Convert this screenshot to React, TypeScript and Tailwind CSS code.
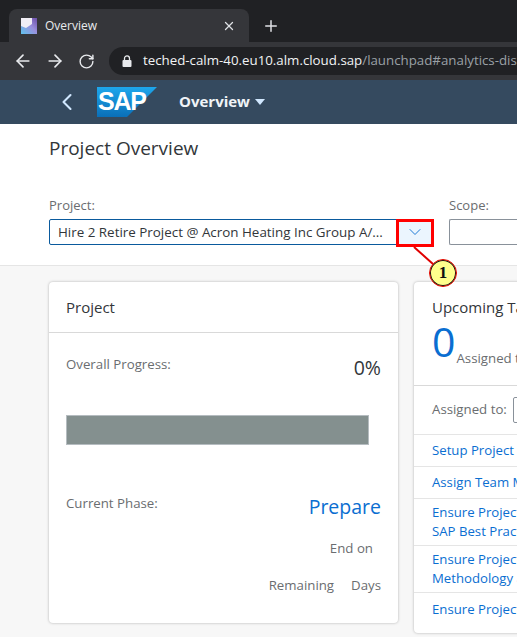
import { ArrowLeft, ArrowRight, RotateCw, X, Plus, ChevronLeft, ChevronDown } from "lucide-react";

const F72 = "font-['Open_Sans','Noto_Sans',sans-serif]";

function Favicon() {
  return (
    <svg width="16" height="16" viewBox="0 0 16 16" className="shrink-0">
      <defs>
        <linearGradient id="fav" x1="0" y1="1" x2="1" y2="0">
          <stop offset="0" stopColor="#5fc4ee" />
          <stop offset="0.55" stopColor="#9a8fdc" />
          <stop offset="1" stopColor="#6d4fa8" />
        </linearGradient>
      </defs>
      <rect width="16" height="16" fill="#f1eef6" />
      <path d="M0 16V8L5 10L11 6V0L16 0V16Z" fill="url(#fav)" />
    </svg>
  );
}

function SapLogo() {
  return (
    <svg width="60" height="30" viewBox="0 0 60 30" className="shrink-0">
      <defs>
        <linearGradient id="sap" x1="0" y1="0" x2="0" y2="1">
          <stop offset="0" stopColor="#1ea7ec" />
          <stop offset="1" stopColor="#0a6fb8" />
        </linearGradient>
      </defs>
      <path d="M0 0H60L30 30H0Z" fill="url(#sap)" />
      <text x="1" y="22.5" fill="#fff" fontFamily="'Liberation Sans',sans-serif" fontWeight="700" fontSize="25" letterSpacing="-1.2">SAP</text>
    </svg>
  );
}

function SolidLock() {
  return (
    <svg width="10" height="12" viewBox="0 0 10 12" className="shrink-0 mr-[11px]">
      <path d="M2.5 5V3.4a2.5 2.5 0 0 1 5 0V5" fill="none" stroke="#e8eaed" strokeWidth="1.3" />
      <rect x="0.5" y="5" width="9" height="7" rx="1" fill="#e8eaed" />
    </svg>
  );
}

function Row({ lines, last }: { lines: string[]; last?: boolean }) {
  return (
    <div className={`pl-[18px] flex flex-col justify-center whitespace-nowrap text-[13.2px] leading-[19px] text-[#0a6ed1] ${last ? "" : "border-b border-[#e5e5e5]"} ${lines.length > 1 ? "h-[47px]" : "h-[32px]"}`}>
      {lines.map((l) => (
        <span key={l}>{l}</span>
      ))}
    </div>
  );
}

export default function App() {
  return (
    <div className={`relative w-[517px] h-[637px] overflow-hidden bg-[#f7f7f7] ${F72}`}>
      {/* tab strip */}
      <div className="h-[42px] bg-[#202124] pt-[9px] pl-[9px] flex items-start">
        <div className="w-[240px] h-[33px] bg-[#35363a] rounded-t-[8px] flex items-center pl-[12px] pr-[13px]">
          <Favicon />
          <span className="ml-[8px] text-[12px] text-[#e8eaed] flex-1">Overview</span>
          <X size={14} strokeWidth={2.2} className="text-[#dfe1e5]" />
        </div>
        <Plus size={18} strokeWidth={2} className="ml-[13px] mt-[8px] text-[#dfe1e5]" />
      </div>
      {/* toolbar */}
      <div className="h-[38px] bg-[#35363a] flex items-center pl-[13px] text-[#e8eaed]">
        <ArrowLeft size={20} strokeWidth={2} />
        <ArrowRight size={20} strokeWidth={2} className="ml-[12px]" />
        <RotateCw size={17} strokeWidth={2} className="ml-[13px]" />
        <div className="ml-[14px] h-[28px] flex-1 rounded-l-[14px] bg-[#202124] flex items-center pl-[13px] whitespace-nowrap overflow-hidden">
          <SolidLock />
          <span className="text-[13.3px] text-[#f1f3f4]">teched-calm-40.eu10.alm.cloud.sap</span>
          <span className="text-[13.3px] text-[#9aa0a6]">/launchpad#analytics-display</span>
        </div>
      </div>
      {/* shell bar */}
      <div className="h-[44px] bg-[#354a5f] flex items-center pl-[53px]">
        <ChevronLeft size={28} strokeWidth={1.8} className="text-[#d1e8ff]" />
        <div className="ml-[16px]"><SapLogo /></div>
        <span className="ml-[22px] -mt-[2px] text-[15px] font-bold text-[#f0f4f8]">Overview</span>
        <span className="ml-[5px] w-0 h-0 border-x-[5px] border-x-transparent border-t-[6px] border-t-[#d1e8ff]" />
      </div>
      {/* page header */}
      <div className="h-[142px] bg-white border-b border-[#e5e5e5] pl-[49px] pt-[11px]">
        <h1 className="text-[19px] leading-[26px] text-[#32363a]">Project Overview</h1>
        <div className="mt-[35px] flex">
          <div className="w-[400px]">
            <div className="text-[13px] leading-[18px] text-[#6a6d70]">Project:</div>
            <div className="mt-[5px] w-[384px] h-[26px] border border-[#0a5a9d] rounded-[2px] flex items-center bg-white">
              <span className="pl-[8px] flex-1 text-[13.4px] text-[#32363a] whitespace-nowrap overflow-hidden">Hire 2 Retire Project @ Acron Heating Inc Group A/...</span>
              <span className="w-[35px] h-full bg-[#ebf5fe] flex items-center justify-center shrink-0">
                <ChevronDown size={20} strokeWidth={1.1} className="text-[#0a6ed1]" />
              </span>
            </div>
          </div>
          <div className="flex-1">
            <div className="text-[13px] leading-[18px] text-[#6a6d70]">Scope:</div>
            <div className="mt-[5px] h-[26px] border border-[#89919a] rounded-l-[2px] border-r-0 bg-white" />
          </div>
        </div>
      </div>
      {/* cards */}
      <div className="flex items-start gap-[16px] pl-[49px] pt-[16px]">
        <section className="w-[349px] h-[341px] shrink-0 bg-white rounded-[4px] shadow-[0_0_3px_rgba(0,0,0,0.28)] flex flex-col">
          <div className="h-[51px] flex items-center pl-[17px] border-b border-[#d9d9d9] text-[15px] text-[#32363a]">Project</div>
          <div className="pl-[17px] pr-[17px] text-[13.25px] text-[#6a6d70]">
            <div className="mt-[19px] h-[27px] flex justify-between items-start">
              <span className="leading-[24px]">Overall Progress:</span>
              <span className="text-[19.5px] leading-[32px] text-[#32363a]">0%</span>
            </div>
            <div className="mt-[36px] w-[303px] h-[30px] bg-[#84908f] border border-[#b5bcc0]" />
            <div className="mt-[46px] flex justify-between items-start">
              <span className="leading-[24px]">Current Phase:</span>
              <span className="text-[19.5px] leading-[26px] mt-[3px] text-[#0a6ed1]">Prepare</span>
            </div>
            <div className="mt-[18px] text-right pr-[8px] leading-[20px]">End on</div>
            <div className="mt-[17px] flex justify-end gap-[17px] leading-[20px]">
              <span>Remaining</span>
              <span>Days</span>
            </div>
          </div>
        </section>
        <section className="w-[500px] h-[351px] shrink-0 bg-white rounded-[4px] shadow-[0_0_3px_rgba(0,0,0,0.28)] flex flex-col">
          <div className="h-[104px] border-b border-[#d9d9d9] pl-[18px]">
            <div className="pt-[14px] text-[15px] leading-[22px] text-[#32363a]">Upcoming Tasks</div>
            <div className="flex items-end h-[46px]">
              <span className="text-[41px] leading-[46px] text-[#0a6ed1]">0</span>
              <span className="ml-[1px] -mb-[4px] text-[13.25px] leading-[20px] text-[#6a6d70] whitespace-nowrap">Assigned to me</span>
            </div>
          </div>
          <div className="h-[49px] border-b border-[#e5e5e5] pl-[18px] flex items-center text-[13.25px] text-[#6a6d70]">
            <span>Assigned to:</span>
            <span className="ml-[6px] w-[60px] h-[26px] border border-[#89919a] rounded-[2px]" />
          </div>
          <Row lines={["Setup Project"]} />
          <Row lines={["Assign Team Members"]} />
          <Row lines={["Ensure Project Team Is Enabled On", "SAP Best Practices"]} />
          <Row lines={["Ensure Project Team Is Enabled On", "Methodology and Tools"]} />
          <Row lines={["Ensure Project Setup"]} last />
        </section>
      </div>
      {/* callout overlay */}
      <div className="absolute left-[396px] top-[219px] w-[38px] h-[28px] border-[3px] border-[#ff0000]" />
      <svg className="absolute left-0 top-0 pointer-events-none" width="517" height="637">
        <line x1="414" y1="247" x2="443" y2="273" stroke="#e00000" strokeWidth="2" />
      </svg>
      <div className="absolute left-[429px] top-[259px] w-[28px] h-[28px] rounded-full bg-[#ffff8c] border border-[#e00000] shadow-[inset_0_0_0_1px_#111] flex items-center justify-center font-['Liberation_Serif',serif] font-bold text-[17px] text-[#111]">1</div>
    </div>
  );
}
